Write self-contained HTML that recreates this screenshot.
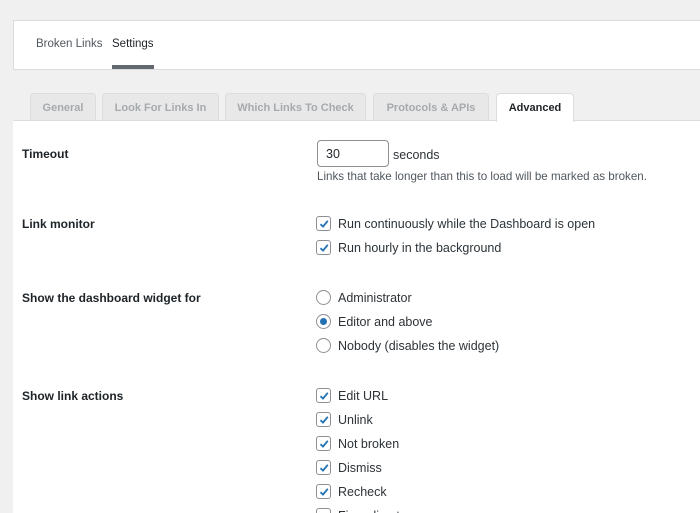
<!DOCTYPE html>
<html><head><style>
*{box-sizing:border-box;margin:0;padding:0}
html,body{width:700px;height:513px;overflow:hidden}
body{background:#f0f0f1;font-family:"Liberation Sans",sans-serif;color:#1d2327;position:relative}
.abs{position:absolute}
.top{left:13px;top:20px;width:700px;height:50px;background:#fff;border:1px solid #dcdcde}
.nav{font-size:11.5px;top:38px;color:#50575e}
.tab{top:93px;height:28px;border:1px solid #dcdcde;border-bottom:none;background:#e8e8e9;color:#a7aaad;font-weight:bold;font-size:11px;text-align:center;line-height:29px;border-radius:4px 4px 0 0}
.content{left:13px;top:120px;width:700px;height:393px;background:#fff;border-top:1px solid #dcdcde}
.lbl{left:22px;font-size:12px;font-weight:bold;color:#1d2327}
.opt{left:338px;font-size:12.5px;color:#2c3338}
.cb{left:316px;width:15px;height:15px;border:1px solid #8c8f94;border-radius:3px;background:#fff}
.cb svg{position:absolute;left:1px;top:1px}
.rd{left:316px;width:15px;height:15px;border:1px solid #8c8f94;border-radius:50%;background:#fff}
</style></head><body>
<div class="abs top"></div>
<div class="abs nav" style="left:36px">Broken Links</div>
<div class="abs nav" style="left:112px;color:#1d2327">Settings</div>
<div class="abs" style="left:112px;top:65px;width:42px;height:4px;background:#646970"></div>
<div class="abs tab" style="left:30px;width:66px">General</div>
<div class="abs tab" style="left:102px;width:117px">Look For Links In</div>
<div class="abs tab" style="left:225px;width:141px">Which Links To Check</div>
<div class="abs tab" style="left:373px;width:116px">Protocols &amp; APIs</div>
<div class="abs content"></div>
<div class="abs tab" style="left:496px;width:78px;height:29px;background:#fff;color:#1d2327">Advanced</div>
<div class="abs lbl" style="top:147px">Timeout</div>
<div class="abs" style="left:317px;top:140px;width:72px;height:27px;border:1px solid #8c8f94;border-radius:4px;background:#fff;font-size:12.5px;padding:6px 0 0 8px">30</div>
<div class="abs opt" style="left:393px;top:148px">seconds</div>
<div class="abs" style="left:317px;top:170px;font-size:11.6px;color:#50575e">Links that take longer than this to load will be marked as broken.</div>
<div class="abs lbl" style="top:217px">Link monitor</div>
<div class="abs lbl" style="top:291px">Show the dashboard widget for</div>
<div class="abs lbl" style="top:389px">Show link actions</div>
<div id="items"></div>
<script>
var chk='<svg width="12" height="12" viewBox="0 0 12 12"><path d="M2.5 6.2 L5 8.6 L9.8 2.8" stroke="#2271b1" stroke-width="1.8" fill="none"/></svg>';
var rows=[[224,'c','Run continuously while the Dashboard is open'],[248,'c','Run hourly in the background'],[298,'r','Administrator'],[322,'s','Editor and above'],[346,'r','Nobody (disables the widget)'],[396,'c','Edit URL'],[420,'c','Unlink'],[444,'c','Not broken'],[468,'c','Dismiss'],[492,'c','Recheck'],[516,'e','Fix redirects']];
var h='';rows.forEach(function(r){var y=r[0];
if(r[1]=='c'||r[1]=='e')h+='<div class="abs cb" style="top:'+(y-8)+'px">'+(r[1]=='c'?chk:'')+'</div>';
else h+='<div class="abs rd" style="top:'+(y-8)+'px">'+(r[1]=='s'?'<div class="abs" style="left:3px;top:3px;width:7px;height:7px;border-radius:50%;background:#2271b1"></div>':'')+'</div>';
h+='<div class="abs opt" style="top:'+(y-7)+'px">'+r[2]+'</div>';});
document.getElementById('items').innerHTML=h;
</script>
</body></html>
